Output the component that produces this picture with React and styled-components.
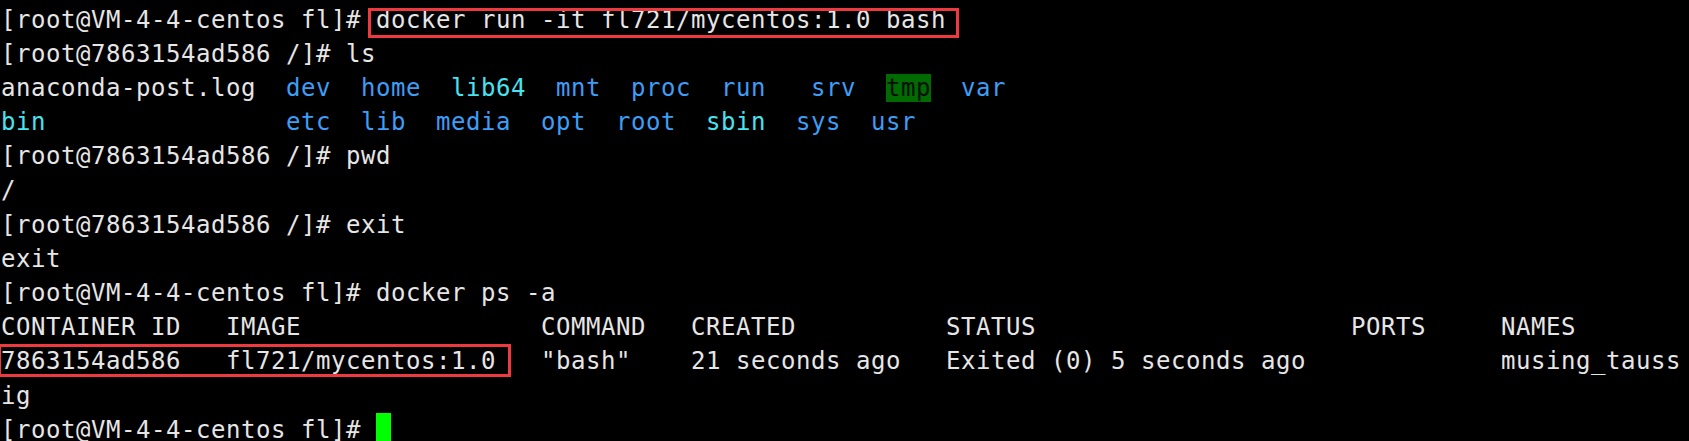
import styled, { createGlobalStyle } from "styled-components";

const GlobalStyle = createGlobalStyle`
  html, body {
    margin: 0;
    padding: 0;
    background: #000;
    overflow: hidden;
  }
`;

const Terminal = styled.div`
  padding: 2.5px 0 0 1px;
  font-family: "DejaVu Sans Mono", "Liberation Mono", monospace;
  font-size: 24px;
  letter-spacing: 0.55px;
  color: #e6e6e6;
`;

const Line = styled.div`
  height: 34.2px;
  line-height: 34.2px;
  white-space: pre;
`;

const COLORS = {
  dir: "#3c9ef6",
  link: "#46e4f0",
};

const Entry = styled.span`
  color: ${(p) => COLORS[p.$kind] || "inherit"};
  ${(p) =>
    p.$kind === "sticky" &&
    `
    color: #041004;
    background: #016a01;
  `}
`;

// red box drawn over part of a line
const Marked = styled.span`
  position: relative;

  &::after {
    content: "";
    position: absolute;
    left: ${(p) => p.$left}px;
    right: ${(p) => p.$right}px;
    top: ${(p) => p.$top}px;
    bottom: ${(p) => p.$bottom}px;
    border: 3px solid #ec3a3f;
    pointer-events: none;
  }
`;

const Cursor = styled.span`
  display: inline-block;
  width: 15px;
  height: 32px;
  vertical-align: top;
  background: #00ff00;
`;

const HOST = "[root@VM-4-4-centos fl]# ";
const GUEST = "[root@7863154ad586 /]# ";

const lsRows = [
  [
    ["anaconda-post.log", null, "  "],
    ["dev", "dir", "  "],
    ["home", "dir", "  "],
    ["lib64", "link", "  "],
    ["mnt", "dir", "  "],
    ["proc", "dir", "  "],
    ["run", "dir", "   "],
    ["srv", "dir", "  "],
    ["tmp", "sticky", "  "],
    ["var", "dir", ""],
  ],
  [
    ["bin", "link", "                "],
    ["etc", "dir", "  "],
    ["lib", "dir", "  "],
    ["media", "dir", "  "],
    ["opt", "dir", "  "],
    ["root", "dir", "  "],
    ["sbin", "link", "  "],
    ["sys", "dir", "  "],
    ["usr", "dir", ""],
  ],
];

export default function App() {
  return (
    <>
      <GlobalStyle />
      <Terminal>
        <Line>
          {HOST}
          <Marked $left={-8} $right={-13} $top={2} $bottom={-4}>
            docker run -it fl721/mycentos:1.0 bash
          </Marked>
        </Line>
        <Line>{GUEST}ls</Line>
        {lsRows.map((row, i) => (
          <Line key={i}>
            {row.map(([name, kind, gap]) => (
              <span key={name}>
                <Entry $kind={kind}>{name}</Entry>
                {gap}
              </span>
            ))}
          </Line>
        ))}
        <Line>{GUEST}pwd</Line>
        <Line>/</Line>
        <Line>{GUEST}exit</Line>
        <Line>exit</Line>
        <Line>{HOST}docker ps -a</Line>
        <Line>
          {"CONTAINER ID   IMAGE                COMMAND   CREATED          STATUS                     PORTS     NAMES"}
        </Line>
        <Line>
          <Marked $left={-3} $right={-15} $top={-3} $bottom={-2}>
            {"7863154ad586   fl721/mycentos:1.0"}
          </Marked>
          {'   "bash"    21 seconds ago   Exited (0) 5 seconds ago             musing_tauss'}
        </Line>
        <Line>ig</Line>
        <Line>
          {HOST}
          <Cursor />
        </Line>
      </Terminal>
    </>
  );
}
